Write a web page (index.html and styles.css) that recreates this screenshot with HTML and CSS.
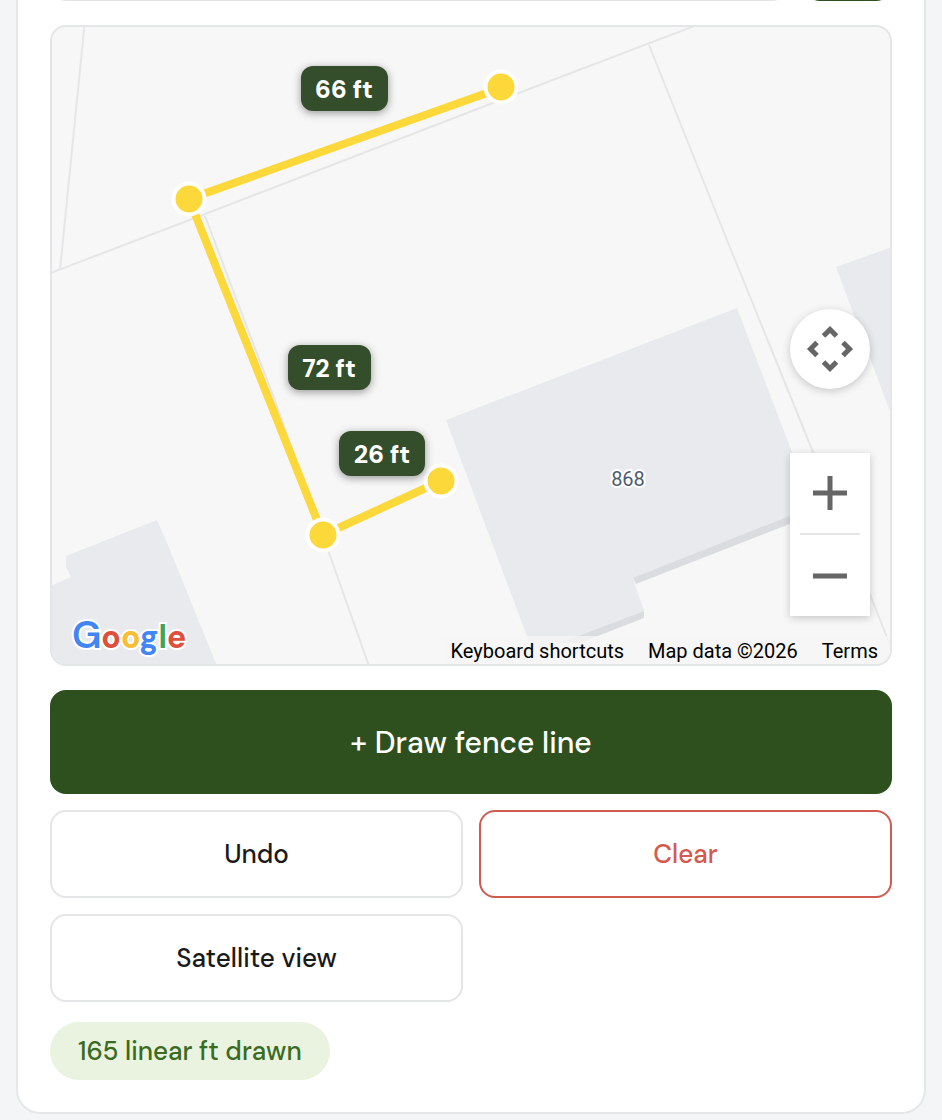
FILE: index.html
```html
<!DOCTYPE html>
<html lang="en">
<head>
<meta charset="utf-8">
<meta name="viewport" content="width=device-width, initial-scale=1">
<title>Fence line</title>
<link rel="stylesheet" href="styles.css">
</head>
<body>
<main class="card">
  <div class="search-row">
    <input class="search-input" type="text" aria-label="Address">
    <button class="search-button" type="button" aria-label="Find"></button>
  </div>

  <section class="map" aria-label="Map">
    <svg class="map-canvas" viewBox="52 27 838 637" preserveAspectRatio="xMidYMid slice">
      <g class="parcel">
        <path d="M85 20 60 270"/>
        <path d="M48 274 192 219 314 172 550 81 697 25"/>
        <path d="M649 45 727 240 813 452 871 597 896 660"/>
        <path d="M205 216 236 298 274 398 328 550 369 666"/>
      </g>
      <g class="building">
        <path d="M446 420 737 308 792 452V516L633 579 644 611 552 647H531Z"/>
        <path d="M836 267 892 247V417Z"/>
        <path d="M50 586 71 577 66 567V556L157 520 170 550 217 666H50Z"/>
      </g>
      <g class="building-side">
        <path d="M792 515V523L636 584 633 578Z"/>
        <path d="M644 611V618L580 643 560 643Z"/>
      </g>
      <text class="house-number" x="628" y="486">868</text>
      <path class="fence" d="M501 88 189 199 323 535 441 481"/>
      <g class="vertex">
        <circle cx="501" cy="87" r="15.5"/>
        <circle cx="189" cy="199" r="15.5"/>
        <circle cx="323" cy="535" r="15.5"/>
        <circle cx="441" cy="481" r="15.5"/>
      </g>
      <g class="length">
        <rect x="301" y="66" width="87" height="45" rx="12"/>
        <text x="344" y="98">66 ft</text>
        <rect x="288" y="345" width="83" height="45" rx="12"/>
        <text x="329" y="377">72 ft</text>
        <rect x="339" y="431" width="86" height="45" rx="12"/>
        <text x="382" y="463">26 ft</text>
      </g>
    </svg>

    <div class="map-controls">
      <button class="camera" type="button" aria-label="Map camera controls">
        <svg width="80" height="80" viewBox="0 0 80 80"><path d="M33.500 27 40 20.500 46.500 27M33.500 53 40 59.500 46.500 53M27 33.500 20.500 40 27 46.500M53 33.500 59.500 40 53 46.500"/></svg>
      </button>
      <div class="zoom">
        <button type="button" aria-label="Zoom in"><svg width="34" height="34" viewBox="0 0 34 34"><path d="M0 17H34M17 0V34"/></svg></button>
        <button type="button" aria-label="Zoom out"><svg width="34" height="34" viewBox="0 0 34 34"><path d="M0 17H34"/></svg></button>
      </div>
    </div>

    <a class="google" href="#" aria-label="Google"><span class="blue initial">G</span><span class="red">o</span><span class="yellow">o</span><span class="blue">g</span><span class="green">l</span><span class="red">e</span></a>

    <div class="attribution">
      <button type="button">Keyboard shortcuts</button>
      <span>Map data ©2026</span>
      <a href="#">Terms</a>
    </div>
  </section>

  <div class="actions">
    <button class="button primary" type="button">+ Draw fence line</button>
    <button class="button" type="button">Undo</button>
    <button class="button danger" type="button">Clear</button>
    <button class="button" type="button">Satellite view</button>
  </div>

  <p class="total">165 linear ft drawn</p>
</main>
</body>
</html>
```
FILE: styles.css
```css
* {
  box-sizing: border-box;
}

body {
  margin: 0;
  background: #f3f5f7;
  color: #1a1a1a;
  font-family: "DM Sans", Inter, sans-serif;
  font-size: 26px;
  font-weight: 500;
}

button,
input {
  font: inherit;
  color: inherit;
}

button {
  padding: 0;
  border: 0;
  background: none;
  cursor: pointer;
}

.card {
  margin: 0 16px;
  padding: 0 32px 32px;
  background: #fff;
  border: 2px solid #e5e7e9;
  border-top: 0;
  border-radius: 0 0 24px 24px;
}

.search-row {
  display: flex;
  align-items: flex-end;
  gap: 16px;
  height: 1px;
  margin-bottom: 24px;
  overflow: hidden;
}

.search-input {
  flex: 1;
  min-width: 0;
  height: 88px;
  border: 2px solid #e3e4e5;
  border-radius: 16px;
}

.search-button {
  width: 88px;
  height: 88px;
  border-radius: 16px;
  background: #2d501e;
}

.map {
  position: relative;
  height: 641px;
  overflow: hidden;
  background: #f7f7f7;
  border: 2px solid #e3e5e6;
  border-radius: 16px;
}

.map-canvas {
  display: block;
  width: 100%;
  height: 100%;
}

.parcel {
  fill: none;
  stroke: #e5e6e7;
  stroke-width: 2;
}

.building {
  fill: #e8eaed;
}

.building-side {
  fill: #dadce0;
}

.house-number {
  fill: #4d5b70;
  stroke: #fff;
  stroke-width: 4;
  stroke-linejoin: round;
  paint-order: stroke;
  font-family: Roboto, sans-serif;
  font-size: 20px;
  font-weight: 400;
  text-anchor: middle;
}

.fence {
  fill: none;
  stroke: #fdd83a;
  stroke-width: 8;
}

.vertex {
  fill: #fdd83a;
  stroke: #fff;
  stroke-width: 4;
}

.length rect {
  fill: #344d2a;
  filter: drop-shadow(0 2px 4px rgba(0, 0, 0, 0.4));
}

.length text {
  fill: #fff;
  font-size: 25px;
  font-weight: 800;
  text-anchor: middle;
}

.map-controls {
  position: absolute;
  right: 20px;
  bottom: 48px;
  display: flex;
  flex-direction: column;
  gap: 64px;
}

.map-controls svg {
  display: block;
  fill: none;
  stroke: #666;
  stroke-width: 5;
}

.camera {
  width: 80px;
  height: 80px;
  background: #fff;
  border-radius: 50%;
  box-shadow: 0 2px 8px rgba(0, 0, 0, 0.2);
}

.zoom {
  background: #fff;
  box-shadow: 0 2px 8px rgba(0, 0, 0, 0.2);
}

.zoom button {
  display: grid;
  place-items: center;
  width: 80px;
  height: 80px;
}

.zoom button + button::before {
  content: "";
  width: 60px;
  height: 2px;
  background: #e6e6e6;
}

.zoom button + button {
  grid-template-rows: 2px 1fr;
  height: 83px;
}

.google {
  position: absolute;
  left: 20px;
  bottom: 5px;
  font-size: 32px;
  font-weight: 700;
  line-height: 44px;
  text-decoration: none;
  -webkit-text-stroke: 4px #fff;
  paint-order: stroke fill;
}

.initial {
  font-size: 38px;
  font-weight: 600;
}

.blue {
  color: #4285f4;
}

.red {
  color: #e04f3c;
}

.yellow {
  color: #f8bd32;
}

.green {
  color: #3fa45b;
}

.attribution {
  position: absolute;
  right: 0;
  bottom: 0;
  display: flex;
  gap: 24px;
  padding: 2px 12px 0 10px;
  background: rgba(245, 245, 245, 0.8);
  color: #000;
  font-family: Roboto, sans-serif;
  font-size: 20px;
  font-weight: 400;
  line-height: 26px;
}

.attribution a {
  color: inherit;
  text-decoration: none;
}

.actions {
  display: grid;
  grid-template-columns: 1fr 1fr;
  gap: 16px;
  margin: 24px 0 20px;
}

.button {
  height: 88px;
  background: #fff;
  border: 2px solid #e4e5e6;
  border-radius: 16px;
}

.primary {
  grid-column: 1 / -1;
  height: 104px;
  background: #2d501e;
  border: 0;
  color: #fff;
  font-size: 30px;
}

.danger {
  border-color: #cf5a50;
  color: #d5594e;
}

.total {
  width: fit-content;
  margin: 0;
  padding: 0 28px;
  background: #e9f3e0;
  border-radius: 29px;
  color: #3a6b20;
  line-height: 58px;
}
```
